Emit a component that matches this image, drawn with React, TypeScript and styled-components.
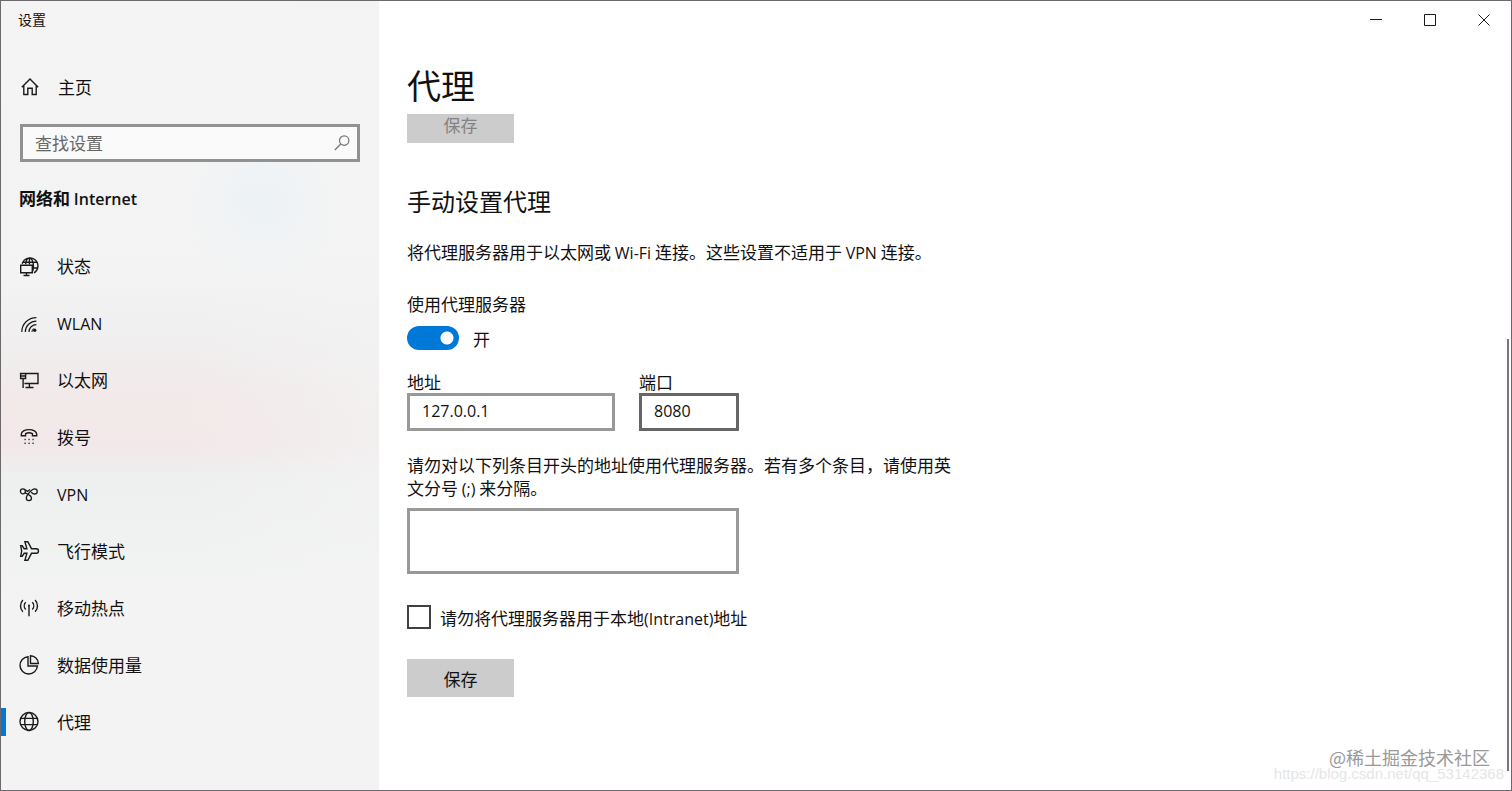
import React, { useState } from 'react';
import styled, { createGlobalStyle } from 'styled-components';

const GlobalStyle = createGlobalStyle`
  *, *::before, *::after { box-sizing: border-box; }
  body {
    margin: 0;
    background: #fff;
    color: #111;
    font: 400 17px/23px 'Noto Sans CJK SC', sans-serif;
  }
  h1, h2, p { margin: 0; font-weight: 400; }
  button, input, textarea { font: inherit; color: inherit; border-radius: 0; }
`;

const Window = styled.div`
  position: relative;
  display: flex;
  min-height: 100vh;
  border: 1px solid #6b696b;
`;

const Sidebar = styled.aside`
  flex: 0 0 378px;
  padding-bottom: 24px;
  background:
    radial-gradient(ellipse 80px 80px at 260px 200px, #edf2f5 0%, #edf2f500 100%),
    linear-gradient(90deg, #f3f3f300 50%, #f3f3f3aa 100%),
    linear-gradient(180deg, #f4f4f4 0, #f3f3f3 270px, #f0eeee 350px, #f2eaea 390px, #f2e8e9 445px, #eeefef 475px, #f0f1f1 540px, #f3f3f3 600px);
`;

const AppTitle = styled.div`
  padding: 7px 17px 0;
  height: 66px;
  font-size: 14px;
`;

const HomeLink = styled.a`
  display: flex;
  align-items: center;
  gap: 17px;
  height: 38px;
  padding: 0 18px;
  color: inherit;
  text-decoration: none;
`;

const SearchBox = styled.label`
  display: flex;
  align-items: center;
  height: 38px;
  margin: 19px 19px 0;
  padding: 0 6px 0 12px;
  border: 3px solid #919191;
  background: #fafafa;
`;

const SearchInput = styled.input`
  flex: 1;
  min-width: 0;
  height: 30px;
  padding: 0 0 2px;
  border: 0;
  outline: 0;
  background: transparent;
  &::placeholder { color: #666; opacity: 1; }
`;

const Category = styled.h2`
  padding: 24px 18px 0;
  height: 75px;
  font-size: 17px;
  && { font-weight: 700; }
`;

const NavItem = styled.a<{ $active?: boolean }>`
  display: flex;
  align-items: center;
  gap: 17px;
  height: 57px;
  padding: 0 17px;
  color: inherit;
  text-decoration: none;
  background: ${p => (p.$active ? 'linear-gradient(#0078d7, #0078d7) 0 50% / 5px 28px no-repeat' : 'none')};
`;

const Latin = styled.span`
  font-family: 'Open Sans', 'Noto Sans', sans-serif;
  font-size: 16px;
  line-height: 16px;
`;

const SemiboldLatin = styled(Latin)`
  font-weight: 600;
`;

const Main = styled.main`
  flex: 1;
  min-width: 0;
  background: #fff;
`;

const Caption = styled.div`
  display: flex;
  justify-content: flex-end;
  height: 38px;
`;

const CaptionButton = styled.button`
  width: 54px;
  padding: 0;
  border: 0;
  background: transparent;
  display: grid;
  place-items: center;
`;

const Content = styled.div`
  padding: 21px 28px 40px;
`;

const PageTitle = styled.h1`
  font-size: 34px;
  line-height: 50px;
`;

const ScrollEdge = styled.div`
  display: flex;
  align-items: flex-end;
  height: 29px;
  margin-top: 4px;
  overflow: hidden;
`;

const SaveButton = styled.button`
  flex: none;
  width: 107px;
  height: 38px;
  padding: 0;
  border: 0;
  background: #ccc;
  &:disabled { color: #838383; }
`;

const SectionTitle = styled.h2`
  margin-top: 40px;
  font-size: 24px;
  line-height: 36px;
`;

const Text = styled.p<{ $top: number }>`
  display: block;
  max-width: 550px;
  margin-top: ${p => p.$top}px;
`;

const SwitchLabel = styled.label`
  display: block;
  margin-top: 29px;
`;

const SwitchRow = styled.div`
  display: flex;
  align-items: center;
  gap: 14px;
  margin-top: 11px;
  height: 24px;
`;

const Switch = styled.input`
  appearance: none;
  width: 52px;
  height: 24px;
  margin: 0;
  && { border-radius: 12px; }
  background: ${p => (p.checked
    ? 'radial-gradient(circle at 40px 12px, #fff 6px, #0078d7 7px)'
    : 'radial-gradient(circle at 12px 12px, #fff 6px, #999 7px)')};
`;

const Fields = styled.div`
  display: flex;
  gap: 24px;
  margin-top: 20px;
`;

const Field = styled.label<{ $width: number }>`
  display: flex;
  flex-direction: column;
  width: ${p => p.$width}px;
`;

const TextBox = styled.input<{ $hover?: boolean }>`
  width: 100%;
  height: 38px;
  padding: 0 12px 2px;
  border: 3px solid ${p => (p.$hover ? '#666' : '#999')};
  outline: 0;
  background: #fff;
  && { font-family: 'Open Sans', 'Noto Sans', sans-serif; font-size: 16px; }
`;

const Exceptions = styled.textarea`
  display: block;
  width: 332px;
  height: 66px;
  margin-top: 9px;
  padding: 6px 12px;
  border: 3px solid #999;
  outline: 0;
  resize: none;
`;

const CheckRow = styled.label`
  display: flex;
  align-items: center;
  gap: 9px;
  height: 24px;
  margin: 31px 0 30px;
`;

const CheckBox = styled.input`
  appearance: none;
  width: 24px;
  height: 24px;
  margin: 0;
  border: 2px solid #404040;
  background: #fff;
  &:checked { background: #0078d7; }
`;

const ScrollThumb = styled.div`
  position: absolute;
  top: 338px;
  right: 2px;
  bottom: 19px;
  width: 2px;
  background: #777;
`;

const Watermark = styled.div`
  position: absolute;
  right: 21px;
  bottom: 20px;
  font-size: 18px;
  line-height: 26px;
  color: #999;
`;

const SourceMark = styled.div`
  position: absolute;
  right: 7px;
  bottom: 6px;
  font: 15px/20px 'Liberation Sans', sans-serif;
  color: #e6e6e6;
`;

const Svg = ({ children, size = 22, color = '#1a1a1a' }: { children: React.ReactNode; size?: number; color?: string }) => (
  <svg width={size} height={size} viewBox={`0 0 ${size} ${size}`} fill="none" stroke={color} strokeWidth="1.4" aria-hidden="true">
    {children}
  </svg>
);

const HomeIcon = () => (
  <Svg>
    <path d="M2.800 12.200 11 4l8.200 8.200M4.800 10.500v9h4v-6.200h4.400v6.200h4v-9" />
  </Svg>
);

const SearchIcon = () => (
  <Svg size={18} color="#757575">
    <circle cx="11.200" cy="6.600" r="4.700" strokeWidth="1.200" />
    <path d="M7.800 10 1.800 16" strokeWidth="1.200" />
  </Svg>
);

const StatusIcon = () => (
  <Svg>
    <path d="M4.200 8.800a8 8 0 1 1 11.800 9M4.800 7.300h14M14.500 13h5M7.600 9.300C7.900 5.500 9.400 3 11.400 3c2.200 0 4 3.400 4 8 0 2.600-.4 4.600-1.100 6M11.400 3v6.500" />
    <path d="M2.700 10.300h11.600v7.400H2.700zM8.500 17.700v2.600M5.500 20.500h6" />
  </Svg>
);

const WlanIcon = () => (
  <Svg>
    <g strokeWidth="1.200">
      <path d="M3.800 20c0-8 6.400-14.400 14.600-14.400M7.300 20c0-6 5-10.900 11.100-10.900M10.900 20c0-4.100 3.400-7.400 7.500-7.400" />
      <path d="M14 20c0-1.500.6-2.700 1.600-3.500" strokeWidth="1" />
    </g>
    <circle cx="16.700" cy="18.300" r="1.700" fill="#1a1a1a" stroke="none" />
  </Svg>
);

const EthernetIcon = () => (
  <Svg>
    <path d="M8 4.500h12v10H6.400M2.600 4.500h5v5h-5zM2.600 7h5M5.100 9.500v9.500M11.400 14.500v3.800M7.500 18.500h8" />
  </Svg>
);

const DialIcon = () => (
  <Svg>
    <path d="M3.300 9.700V8.200c0-2.700 3.600-4.600 7.700-4.600s7.700 1.900 7.700 4.600v1.500h-4.300V7.600c-1.700-.9-5.100-.9-6.800 0v2.100z" />
    <g fill="#333" stroke="none">
      {[6.400, 10.400, 14.400].map(x => [12.800, 16.600].map(y => <rect key={`${x}-${y}`} x={x} y={y} width="1.400" height="1.400" />))}
    </g>
  </Svg>
);

const VpnIcon = () => (
  <Svg>
    <g strokeWidth="1.300">
      <circle cx="4.900" cy="8.300" r="2.500" />
      <path d="M7 9.700l3.600 1.900c1.700.9 2.900 1.800 2.900 3.400a2.600 2.600 0 0 1-5.200 0c0-2 1.700-3.800 3.400-5.800 1.600-1.900 2.900-3.400 4.900-3.400a2.600 2.600 0 0 1 0 5.200c-1.600 0-2.500-.8-3.400-1.700" />
      <path d="M7.200 6.800l2.400 1.600L12 6.500" />
    </g>
  </Svg>
);

const PlaneIcon = () => (
  <Svg>
    <path d="M6.900 1.700H9.800l3.700 7h4.800c2.900 0 2.900 4.600 0 4.600h-4.800l-3.700 7H6.900l2-7H6.200l-2 2.900H2.700L3.700 11l-1-5.200h1.500l2 2.900h2.700z" />
  </Svg>
);

const HotspotIcon = () => (
  <Svg>
    <path d="M4.900 3c-3.200 3.400-3.200 8.400 0 11.800M17.100 3c3.200 3.400 3.200 8.400 0 11.800M7.700 5.300c-1.900 2-1.900 5.200 0 7.200M14.300 5.300c1.900 2 1.900 5.200 0 7.200M11 8.500v10.800" />
    <circle cx="11" cy="8.500" r="1" fill="#1a1a1a" stroke="none" />
  </Svg>
);

const DataIcon = () => (
  <Svg>
    <path d="M10 2.700a8.700 8.700 0 1 0 9.400 9.300H10zM12.500 1.700a8.300 8.300 0 0 1 7.900 7.800h-7.900z" />
  </Svg>
);

const ProxyIcon = () => (
  <Svg>
    <circle cx="11" cy="10.500" r="9" />
    <ellipse cx="11" cy="10.500" rx="4.300" ry="9" />
    <path d="M2.900 7.400h16.200M2.900 13.600h16.200" />
  </Svg>
);

const navItems = [
  { label: '状态', icon: <StatusIcon /> },
  { label: <Latin>WLAN</Latin>, icon: <WlanIcon /> },
  { label: '以太网', icon: <EthernetIcon /> },
  { label: '拨号', icon: <DialIcon /> },
  { label: <Latin>VPN</Latin>, icon: <VpnIcon /> },
  { label: '飞行模式', icon: <PlaneIcon /> },
  { label: '移动热点', icon: <HotspotIcon /> },
  { label: '数据使用量', icon: <DataIcon /> },
  { label: '代理', icon: <ProxyIcon />, active: true },
];

export default function App() {
  const [enabled, setEnabled] = useState(true);
  return (
    <>
      <GlobalStyle />
      <Window>
        <Sidebar>
          <AppTitle>设置</AppTitle>
          <HomeLink href="#home"><HomeIcon />主页</HomeLink>
          <SearchBox>
            <SearchInput type="text" placeholder="查找设置" aria-label="查找设置" />
            <SearchIcon />
          </SearchBox>
          <Category>网络和 <SemiboldLatin>Internet</SemiboldLatin></Category>
          <nav>
            {navItems.map((item, i) => (
              <NavItem key={i} href={`#item-${i}`} $active={item.active}>
                {item.icon}
                <span>{item.label}</span>
              </NavItem>
            ))}
          </nav>
        </Sidebar>
        <Main>
          <Caption>
            <CaptionButton aria-label="最小化"><Svg size={12}><path d="M0 5.500h12" strokeWidth="1" /></Svg></CaptionButton>
            <CaptionButton aria-label="最大化"><Svg size={12}><path d="M.5.5h11v11H.5z" strokeWidth="1" /></Svg></CaptionButton>
            <CaptionButton aria-label="关闭"><Svg size={12}><path d="m.5.5 11 11m0-11-11 11" strokeWidth="1" /></Svg></CaptionButton>
          </Caption>
          <Content>
            <PageTitle>代理</PageTitle>
            <ScrollEdge><SaveButton disabled>保存</SaveButton></ScrollEdge>
            <SectionTitle>手动设置代理</SectionTitle>
            <Text $top={21}>将代理服务器用于以太网或 <Latin>Wi-Fi</Latin> 连接。这些设置不适用于 <Latin>VPN</Latin> 连接。</Text>
            <SwitchLabel htmlFor="use-proxy">使用代理服务器</SwitchLabel>
            <SwitchRow>
              <Switch id="use-proxy" type="checkbox" role="switch" checked={enabled} onChange={e => setEnabled(e.target.checked)} />
              <span>{enabled ? '开' : '关'}</span>
            </SwitchRow>
            <Fields>
              <Field $width={208}>地址<TextBox type="text" defaultValue="127.0.0.1" /></Field>
              <Field $width={100}>端口<TextBox type="text" defaultValue="8080" $hover /></Field>
            </Fields>
            <Text as="label" htmlFor="exceptions" $top={22}>
              请勿对以下列条目开头的地址使用代理服务器。若有多个条目，请使用英文分号 <Latin>(;)</Latin> 来分隔。
            </Text>
            <Exceptions id="exceptions" />
            <CheckRow>
              <CheckBox type="checkbox" />
              <span>请勿将代理服务器用于本地<Latin>(Intranet)</Latin>地址</span>
            </CheckRow>
            <SaveButton>保存</SaveButton>
          </Content>
        </Main>
        <ScrollThumb />
        <SourceMark>https://blog.csdn.net/qq_53142368</SourceMark>
        <Watermark>@稀土掘金技术社区</Watermark>
      </Window>
    </>
  );
}
